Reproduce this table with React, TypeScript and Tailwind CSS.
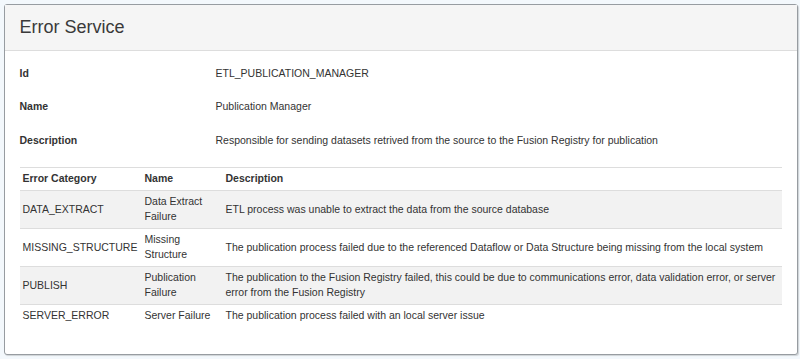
import React from 'react';

const SERVICE = [
  { label: 'Id', value: 'ETL_PUBLICATION_MANAGER' },
  { label: 'Name', value: 'Publication Manager' },
  {
    label: 'Description',
    value: 'Responsible for sending datasets retrived from the source to the Fusion Registry for publication',
  },
];

const ERRORS = [
  {
    category: 'DATA_EXTRACT',
    name: 'Data Extract Failure',
    description: 'ETL process was unable to extract the data from the source database',
  },
  {
    category: 'MISSING_STRUCTURE',
    name: 'Missing Structure',
    description:
      'The publication process failed due to the referenced Dataflow or Data Structure being missing from the local system',
  },
  {
    category: 'PUBLISH',
    name: 'Publication Failure',
    description:
      'The publication to the Fusion Registry failed, this could be due to communications error, data validation error, or server error from the Fusion Registry',
  },
  {
    category: 'SERVER_ERROR',
    name: 'Server Failure',
    description: 'The publication process failed with an local server issue',
  },
];

export default function App() {
  return (
    <div className="h-[359px] w-[800px] bg-[#f3f8fc] pt-[3.5px] pl-[3.5px] pr-[2px] font-['Liberation_Sans',Arial,sans-serif] text-[#333]">
      <div className="h-[351px] rounded-[3px] border-[1.5px] border-[#979ca1] bg-white shadow-[1px_1px_1px_rgba(0,0,0,0.15)]">
        <div className="flex h-[46px] items-center border-b border-[#ddd] bg-[#f5f5f5] px-[15px]">
          <h3 className="text-[18px] leading-none text-[#3a3a3a]">Error Service</h3>
        </div>

        <div className="px-[15px] pt-[15px] text-[10.5px] leading-[15px]">
          <div className="flex flex-col gap-[18.5px]">
            {SERVICE.map((row) => (
              <div key={row.label} className="grid grid-cols-[196px_1fr]">
                <div className="font-bold">{row.label}</div>
                <div>{row.value}</div>
              </div>
            ))}
          </div>

          <table className="mt-[19px] w-full table-fixed border-collapse">
            <colgroup>
              <col className="w-[122px]" />
              <col className="w-[81px]" />
              <col />
            </colgroup>
            <thead>
              <tr className="border-t border-b border-[#ddd] text-left">
                <th className="px-[3px] py-[3.5px] font-bold">Error Category</th>
                <th className="px-[3px] py-[3.5px] font-bold">Name</th>
                <th className="px-[3px] py-[3.5px] font-bold">Description</th>
              </tr>
            </thead>
            <tbody>
              {ERRORS.map((err, i) => (
                <tr
                  key={err.category}
                  className={`border-t border-[#ddd] align-middle ${i % 2 === 0 ? 'bg-[#f2f2f2]' : 'bg-white'}`}
                >
                  <td className="px-[3px] py-[3.5px]">{err.category}</td>
                  <td className="px-[3px] py-[3.5px]">{err.name}</td>
                  <td className="px-[3px] py-[3.5px]">{err.description}</td>
                </tr>
              ))}
            </tbody>
          </table>
        </div>
      </div>
    </div>
  );
}
